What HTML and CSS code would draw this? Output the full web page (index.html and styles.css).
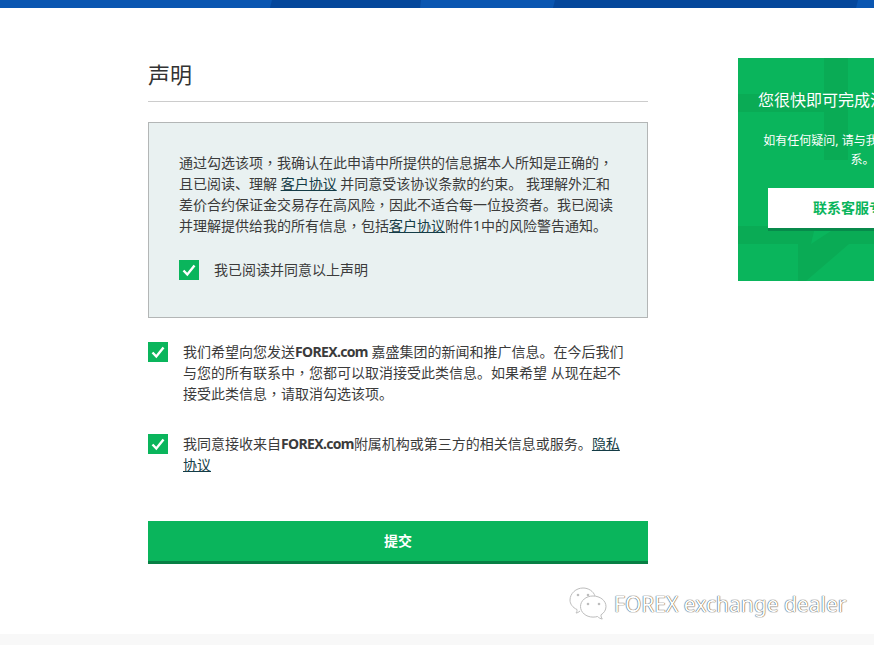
FILE: index.html
```html
<!DOCTYPE html>
<html lang="zh-CN">
<head>
<meta charset="utf-8">
<title>声明</title>
<link rel="stylesheet" href="styles.css">
</head>
<body>
<div class="topbar">
  <svg class="topbar-art" width="874" height="8" viewBox="0 0 874 8" aria-hidden="true">
    <rect width="874" height="8" fill="#0a56b1"/>
    <polygon points="272,0 421,0 420,8 270,8" fill="#05479b"/>
    <polygon points="555,0 858,0 856,8 553,8" fill="#05479b"/>
  </svg>
</div>
<div class="page">
  <main class="main">
    <h1 class="title">声明</h1>
    <section class="notice">
      <p class="notice-text">通过勾选该项<span class="mid" lang="zh-TW">，</span>我确认在此申请中所提供的信息据本人所知是正确的<span class="mid" lang="zh-TW">，</span>且已阅读、理解 <a href="#" class="link">客户协议</a> 并同意受该协议条款的约束。 我理解外汇和差价合约保证金交易存在高风险<span class="mid" lang="zh-TW">，</span>因此不适合每一位投资者。我已阅读并理解提供给我的所有信息<span class="mid" lang="zh-TW">，</span>包括<a href="#" class="link">客户协议</a>附件1中的风险警告通知。</p>
      <div class="check-row check-row-inner">
        <span class="check"><svg width="20" height="20" viewBox="0 0 20 20"><path d="M4.500 10.500l3.800 4 7.200-9" fill="none" stroke="#fff" stroke-width="2.400"/></svg></span>
        <span class="check-label">我已阅读并同意以上声明</span>
      </div>
    </section>
    <div class="check-row check-row-first">
      <span class="check"><svg width="20" height="20" viewBox="0 0 20 20"><path d="M4.500 10.500l3.800 4 7.200-9" fill="none" stroke="#fff" stroke-width="2.400"/></svg></span>
      <p class="check-text">我们希望向您发送<b>FOREX.com</b> 嘉盛集团的新闻和推广信息。在今后我们与您的所有联系中<span class="mid" lang="zh-TW">，</span>您都可以取消接受此类信息。如果希望 从现在起不接受此类信息<span class="mid" lang="zh-TW">，</span>请取消勾选该项。</p>
    </div>
    <div class="check-row check-row-second">
      <span class="check"><svg width="20" height="20" viewBox="0 0 20 20"><path d="M4.500 10.500l3.800 4 7.200-9" fill="none" stroke="#fff" stroke-width="2.400"/></svg></span>
      <p class="check-text">我同意接收来自<b>FOREX.com</b>附属机构或第三方的相关信息或服务。<a href="#" class="link">隐私协议</a></p>
    </div>
    <button class="submit" type="button">提交</button>
  </main>
  <aside class="side">
    <svg class="side-art" width="244" height="223" viewBox="0 0 244 223" aria-hidden="true">
      <rect x="86" y="0" width="24" height="102" fill="#0aab55"/>
      <rect x="0" y="36" width="86" height="18" fill="#0aab55"/>
      <rect x="0" y="168" width="244" height="18" fill="#0aab55"/>
      <polygon points="60,186 111,186 68,223 60,223" fill="#0aab55"/>
      <polygon points="73,186 76,173 93,173" fill="#0ab55c"/>
    </svg>
    <h2 class="side-title">您很快即可完成注册申请了！</h2>
    <p class="side-text">如有任何疑问, 请与我们的客服人员联系。</p>
    <a href="#" class="side-button">联系客服专员</a>
  </aside>
</div>
<div class="footer-band"></div>
<div class="watermark">
  <svg width="38" height="34" viewBox="0 0 38 34" aria-hidden="true">
    <g fill="none" stroke="#bdbdbd" stroke-width="1">
      <path d="M11 24c-1.500 1.300-3 2-4 2 .8-1 1.200-2.200 1-3.500C3.600 20.500 1 17 1 13 1 6.500 7 1 14 1c5.500 0 10.500 3.300 12 8"/>
      <path d="M24 9c7 0 13 4.500 13 10.500 0 3.500-2 6.500-5 8.300-.1 1.500.3 3 1.300 4.200-1.800-.2-3.500-1.200-4.800-2.500-1.400.4-2.900.6-4.500.6-7 0-12.500-4.700-12.500-10.600S17 9 24 9z"/>
    </g>
    <g fill="#bdbdbd">
      <circle cx="9" cy="8" r="1.300"/><circle cx="19" cy="8" r="1.300"/>
      <circle cx="19" cy="17" r="1.300"/><circle cx="30" cy="17" r="1.300"/>
    </g>
  </svg>
  <span class="watermark-text">FOREX exchange dealer</span>
</div>
</body>
</html>
```
FILE: styles.css
```css
* { box-sizing: border-box; }
html, body { margin: 0; padding: 0; height: 645px; overflow: hidden; background: #fff; }
body {
  position: relative;
  font-family: "Noto Sans", "Noto Sans CJK SC", sans-serif;
  color: #3b3b3b;
  font-size: 14px;
}
.topbar { height: 8px; }
.topbar-art { display: block; }
.page {
  display: flex;
  align-items: flex-start;
  padding: 50px 0 0 148px;
  width: 1100px;
}
.main { width: 500px; flex: none; }
.title {
  margin: 0;
  height: 44px;
  border-bottom: 1px solid #ccc;
  font-family: "Noto Sans CJK SC", sans-serif;
  font-size: 22px;
  font-weight: 400;
  line-height: 30px;
  color: #333;
}
.notice {
  margin-top: 20px;
  height: 196px;
  padding: 29px 30px 0;
  background: #e9f1f1;
  border: 1px solid #b3b6b6;
}
.notice-text {
  margin: 0;
  font-size: 14px;
  line-height: 21px;
}
.mid { font-family: "Noto Sans CJK TC", sans-serif; }
.link { color: #143c46; text-decoration: underline; }
.check-row { display: flex; align-items: flex-start; }
.check-row-inner { margin-top: 24px; align-items: center; }
.check-row-first { margin-top: 24px; }
.check-row-second { margin-top: 30px; }
.check {
  flex: none;
  width: 20px;
  height: 20px;
  background: #0ab55c;
  display: block;
}
.check svg { display: block; }
.check-label { margin-left: 15px; font-size: 14px; line-height: 20px; }
.check-text {
  margin: -1px 0 0 15px;
  width: 445px;
  font-size: 14px;
  line-height: 21px;
}
.check-text b { font-weight: 700; letter-spacing: -.65px; }
.submit {
  display: block;
  width: 100%;
  height: 43px;
  margin-top: 46px;
  border: 0;
  border-bottom: 3px solid #087f44;
  background: #0ab55c;
  color: #fff;
  font-family: "Noto Sans CJK SC", sans-serif;
  font-size: 14px;
  font-weight: 700;
  padding: 0 0 2px;
}
.side {
  position: relative;
  flex: none;
  width: 244px;
  height: 223px;
  margin-left: 90px;
  background: #0ab55c;
  color: #fff;
  text-align: center;
  padding: 29px 20px 0;
  overflow: hidden;
}
.side-art { position: absolute; left: 0; top: 0; }
.side-title {
  position: relative;
  margin: 0 -10px;
  padding-left: 4px;
  font-size: 16px;
  font-weight: 400;
  line-height: 24px;
  white-space: nowrap;
  font-family: "Noto Sans CJK SC", sans-serif;
}
.side-text {
  position: relative;
  margin: 20px 0 0;
  padding-left: 5px;
  font-size: 12px;
  line-height: 19px;
}
.side-button {
  position: relative;
  display: block;
  margin: 19px 10px 0;
  height: 43px;
  padding-right: 10px;
  line-height: 40px;
  background: #fff;
  border-bottom: 3px solid #088a4b;
  color: #0ab55c;
  font-size: 14px;
  font-weight: 700;
  text-decoration: none;
}
.footer-band {
  position: absolute;
  left: 0; right: 0; bottom: 0;
  height: 11px;
  background: #f8f8f8;
}
.watermark {
  position: absolute;
  left: 569px;
  top: 587px;
  display: flex;
  align-items: center;
  gap: 7px;
}
.watermark-text {
  font-family: "Noto Sans", sans-serif;
  font-size: 21px;
  line-height: 34px;
  color: #fff;
  text-shadow: 0 0 1px #333, 0 0 1px #555;
}
```
